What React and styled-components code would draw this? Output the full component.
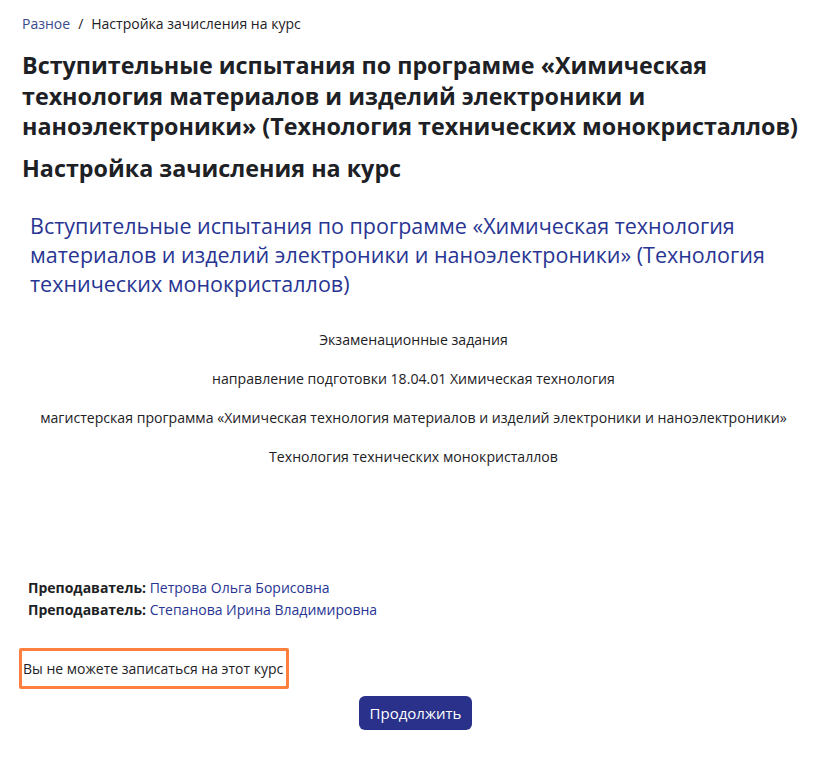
import React from 'react';
import styled, { createGlobalStyle } from 'styled-components';

const GlobalStyle = createGlobalStyle`
  body {
    margin: 0;
    background: #fff;
    font-family: "Open Sans", "Noto Sans", sans-serif;
    color: #1d2125;
  }
`;

const Page = styled.div`
  padding: 14px 30px 20px 22px;
`;

const Breadcrumb = styled.nav`
  display: flex;
  align-items: center;
  gap: 8px;
  font-size: 14px;
  line-height: 20px;
  color: #1d2125;

  a {
    color: #3a4a8c;
    text-decoration: none;
  }
`;

const Title = styled.h1`
  margin: 16px 0 0 0;
  font-size: 23.3px;
  line-height: 30.5px;
  font-weight: 700;
  color: #1d2125;
`;

const SubTitle = styled.h2`
  margin: 11px 0 0 0;
  font-size: 23.3px;
  line-height: 30px;
  font-weight: 700;
  color: #1d2125;
`;

const CourseBox = styled.div`
  padding: 0 12px 0 8px;
  margin-top: 28px;
`;

const CourseName = styled.h3`
  margin: 0;
  font-size: 21.5px;
  line-height: 29px;
  font-weight: 400;
  color: #283593;
`;

const Summary = styled.div`
  margin-top: 32px;
  text-align: center;
  font-size: 14.1px;
  line-height: 20px;

  p {
    margin: 0 0 19px 0;
  }
`;

const Contacts = styled.ul`
  list-style: none;
  margin: 110px 0 0 0;
  padding: 0 0 0 6px;
  font-size: 14px;
  line-height: 22px;
`;

const Contact = styled.li`
  b {
    font-weight: 700;
  }
  a {
    color: #283593;
    text-decoration: none;
  }
`;

const Notice = styled.div`
  display: inline-block;
  margin-top: 27px;
  margin-left: -3px;
  padding: 8px 3px 7px 1px;
  border: 3px solid #ff7f3f;
  border-radius: 2px;
  font-size: 14px;
  line-height: 20px;
`;

const Actions = styled.div`
  display: flex;
  justify-content: center;
  margin-top: 7px;
`;

const Button = styled.button`
  background: #29318a;
  color: #fff;
  border: 0;
  border-radius: 6px;
  padding: 6px 10.5px;
  font-family: inherit;
  font-size: 15px;
  line-height: 22px;
  cursor: pointer;
`;

export default function App() {
  return (
    <Page>
      <GlobalStyle />
      <Breadcrumb>
        <a href="#">Разное</a>
        <span>/</span>
        <span>Настройка зачисления на курс</span>
      </Breadcrumb>
      <Title>
        Вступительные испытания по программе «Химическая технология материалов и изделий
        электроники и наноэлектроники» (Технология технических монокристаллов)
      </Title>
      <SubTitle>Настройка зачисления на курс</SubTitle>
      <CourseBox>
        <CourseName>
          Вступительные испытания по программе «Химическая технология материалов и изделий
          электроники и наноэлектроники» (Технология технических монокристаллов)
        </CourseName>
        <Summary>
          <p>Экзаменационные задания</p>
          <p>направление подготовки 18.04.01 Химическая технология</p>
          <p>магистерская программа «Химическая технология материалов и изделий электроники и наноэлектроники»</p>
          <p>Технология технических монокристаллов</p>
        </Summary>
      </CourseBox>
      <Contacts>
        <Contact>
          <b>Преподаватель:</b> <a href="#">Петрова Ольга Борисовна</a>
        </Contact>
        <Contact>
          <b>Преподаватель:</b> <a href="#">Степанова Ирина Владимировна</a>
        </Contact>
      </Contacts>
      <Notice>Вы не можете записаться на этот курс</Notice>
      <Actions>
        <Button>Продолжить</Button>
      </Actions>
    </Page>
  );
}
